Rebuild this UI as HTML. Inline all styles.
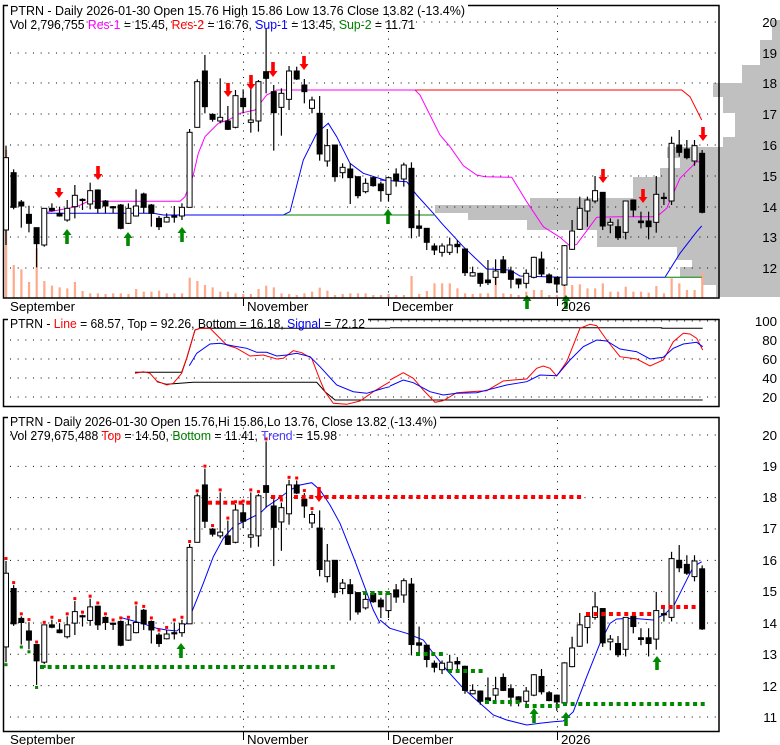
<!DOCTYPE html>
<html><head><meta charset="utf-8">
<style>
html,body{margin:0;padding:0;background:#fff;}
svg{display:block;font-family:"Liberation Sans",Arial,sans-serif;}
</style></head>
<body>
<svg id="s" width="780" height="745" viewBox="0 0 780 745" xmlns="http://www.w3.org/2000/svg">
<g id="prof" fill="#c0c0c0"></g>
<g id="grid" stroke="#000" stroke-width="1" stroke-dasharray="1,6.66" fill="none"></g>
<g id="vol" fill="#ffa98a"></g>
<g id="ov" fill="none"></g>
<g id="cand"></g>
<g id="marks"></g>
<g fill="none" stroke="#000" stroke-width="1.5">
<rect x="3.5" y="5.5" width="715.5" height="292.5"/>
<rect x="3.5" y="319.5" width="715.5" height="87"/>
<rect x="3.5" y="417.5" width="715.5" height="314"/>
</g>
<g stroke="#000" stroke-width="1">
<line x1="243.5" y1="298" x2="243.5" y2="306"/><line x1="388.5" y1="298" x2="388.5" y2="306"/><line x1="557.5" y1="298" x2="557.5" y2="306"/>
<line x1="243.5" y1="732" x2="243.5" y2="740"/><line x1="388.5" y1="732" x2="388.5" y2="740"/><line x1="557.5" y1="732" x2="557.5" y2="740"/>
</g>
<rect x="8" y="0" width="460" height="11" fill="#fff"/>
<rect x="8" y="312" width="360" height="12" fill="#fff"/>
<rect x="8" y="410" width="432" height="12" fill="#fff"/>
<g font-size="13.3" fill="#000" lengthAdjust="spacingAndGlyphs">
<text x="10" y="15" textLength="455" lengthAdjust="spacingAndGlyphs">PTRN - Daily 2026-01-30 Open 15.76  High 15.86  Low 13.76  Close 13.82 (-13.4%)</text>
<text x="10" y="29" textLength="405" lengthAdjust="spacingAndGlyphs">Vol 2,796,755 <tspan fill="#ff00ff">Res-1</tspan> = 15.45, <tspan fill="#ff0000">Res-2</tspan> = 16.76, <tspan fill="#0000ff">Sup-1</tspan> = 13.45, <tspan fill="#008000">Sup-2</tspan> = 11.71</text>
<text x="10" y="328" textLength="355" lengthAdjust="spacingAndGlyphs">PTRN - <tspan fill="#ff0000">Line</tspan> = 68.57, Top = 92.26, Bottom = 16.18, <tspan fill="#0000ff">Signal</tspan> = 72.12</text>
<text x="10" y="426" textLength="427" lengthAdjust="spacingAndGlyphs">PTRN - Daily 2026-01-30 Open 15.76,Hi 15.86,Lo 13.76, Close 13.82 (-13.4%)</text>
<text x="10" y="440" textLength="327" lengthAdjust="spacingAndGlyphs">Vol 279,675,488 <tspan fill="#ff0000">Top</tspan> = 14.50, <tspan fill="#008000">Bottom</tspan> = 11.41, <tspan fill="#4b3cff">Trend</tspan> = 15.98</text>
<text x="10" y="311">September</text><text x="247" y="311">November</text><text x="392" y="311">December</text><text x="561" y="311">2026</text>
<text x="10" y="744">September</text><text x="247" y="744">November</text><text x="392" y="744">December</text><text x="561" y="744">2026</text>
</g>
<g font-size="13.3" fill="#000" text-anchor="end">
<text x="777" y="27">20</text><text x="777" y="58">19</text><text x="777" y="88">18</text><text x="777" y="119">17</text><text x="777" y="150">16</text><text x="777" y="181">15</text><text x="777" y="212">14</text><text x="777" y="242">13</text><text x="777" y="273">12</text>
<text x="777" y="326">100</text><text x="777" y="345">80</text><text x="777" y="364">60</text><text x="777" y="383">40</text><text x="777" y="402">20</text>
<text x="777" y="440">20</text><text x="777" y="471">19</text><text x="777" y="502">18</text><text x="777" y="533">17</text><text x="777" y="565">16</text><text x="777" y="596">15</text><text x="777" y="628">14</text><text x="777" y="659">13</text><text x="777" y="691">12</text><text x="777" y="722">11</text>
</g>
</svg>
<script>
(function(){
var NS="http://www.w3.org/2000/svg";
function el(p,t,a){var e=document.createElementNS(NS,t);for(var k in a)e.setAttribute(k,a[k]);document.getElementById(p).appendChild(e);return e;}
var P=[[20,40,772],[40,65,760],[65,83,742],[83,97,713],[97,113,723],[113,137,735],[137,147,723],[147,158,667],[158,168,680],[168,177,660],[177,198,633],[198,205,530],[205,213,435],[213,220,468],[220,230,527],[230,247,597],[247,260,677],[260,267,692],[267,277,680],[277,285,703],[285,297,716]];
P.forEach(function(r){el("prof","rect",{x:r[2],y:r[0],width:780-r[2],height:r[1]-r[0]});});
function hgrid(y){el("grid","line",{x1:10,y1:y,x2:716,y2:y});}
[22,53,83,114,145,176,207,237,268].forEach(hgrid);
[321,340,359,378,397].forEach(hgrid);
for(var p=20;p>=11;p--)hgrid(435+(20-p)*31.33);
[243.5,388.5,557.5].forEach(function(x){el("grid","line",{x1:x,y1:8,x2:x,y2:296});el("grid","line",{x1:x,y1:420,x2:x,y2:730});});
var C=[[473,690,437,735,1],[518,622,508,628,0],[606,618,600,683,0],[643,670,617,697,0],[683,731,683,802,0],[625,735,625,740,1],[625,632,610,635,0],[640,648,620,650,0],[625,660,600,665,1],[586,620,555,655,1],[598,601,595,630,0],[572,612,548,628,1],[570,625,568,640,0],[603,618,600,640,0],[620,622,618,640,0],[615,685,612,688,0],[625,670,610,672,1],[618,648,568,650,1],[582,622,578,640,0],[615,640,612,680,0],[655,680,648,690,0],[652,666,640,668,1],[648,650,618,668,0],[622,648,610,660,1],[397,622,387,622,1],[245,382,238,382,1],[213,320,165,340,0],[343,358,340,365,0],[352,363,235,370,1],[363,388,318,390,0],[287,382,270,385,1],[295,320,268,340,0],[360,367,235,398,1],[245,363,240,395,1],[215,235,85,280,0],[275,338,255,452,0],[280,322,265,407,1],[213,298,198,330,1],[213,237,200,240,0],[255,275,237,310,0],[300,325,290,340,1],[340,462,288,482,0],[437,483,387,500,1],[435,530,435,545,0],[502,518,490,535,1],[507,533,490,612,0],[530,587,530,595,0],[550,575,535,580,1],[533,557,530,560,0],[552,572,545,605,0],[533,583,530,605,1],[522,543,505,560,0],[495,537,488,560,1],[505,683,487,715,0],[678,685,630,710,0],[685,727,685,750,0],[738,750,730,765,0],[738,757,730,770,1],[735,757,713,765,1],[733,740,720,760,0],[747,818,745,828,0],[818,828,800,830,1],[820,850,818,860,0],[840,848,780,855,0],[813,832,778,855,1],[780,818,768,820,0],[813,838,800,865,0],[837,852,835,865,0],[820,850,808,865,1],[772,832,770,835,1],[777,822,755,830,0],[825,848,820,850,0],[832,852,830,878,0],[737,855,735,858,1],[693,748,660,750,1],[625,688,590,690,1],[600,633,590,680,1],[572,603,528,610,1],[577,678,577,690,0],[667,675,655,700,1],[680,713,658,720,0],[603,697,603,718,1],[600,630,598,650,0],[663,668,635,685,0],[663,680,635,718,0],[583,667,528,698,1],[592,595,578,615,0],[430,603,410,615,1],[435,457,390,470,0],[447,473,420,478,0],[437,483,420,497,1],[460,637,450,640,0]];
var V=[450,795,808,846,745,843,857,862,865,846,873,880,880,882,880,880,882,867,875,875,872,880,880,880,833,843,855,862,875,875,880,882,882,867,857,862,880,882,885,880,875,863,872,885,882,880,880,880,885,885,882,885,885,828,882,873,850,850,850,865,880,882,880,880,820,880,882,885,875,870,870,885,885,855,855,853,865,865,850,875,875,860,875,875,878,858,880,835,850,870,870,818];
function X(i){return 6+7.65*i;}
function y3(z){return 435+(z/3-22)*31.33/30.75;}
V.forEach(function(z,i){el("vol","rect",{x:X(i)-1,y:z/3,width:2.2,height:297.7-z/3});});
function candle(i,c,f){var x=X(i);
 el("cand","line",{x1:x,y1:f(c[2]),x2:x,y2:f(c[3]),stroke:"#000","stroke-width":1.2});
 var h=Math.max(f(c[1])-f(c[0]),1.2);
 el("cand","rect",{x:x-2.5,y:f(c[0]),width:5,height:h,fill:c[4]?"#fff":"#000",stroke:"#000","stroke-width":1});}
C.forEach(function(c,i){candle(i,c,function(z){return z/3;});candle(i,c,y3);});
C.forEach(function(c,i){ if(i<41){el("marks","rect",{x:X(i)-1.5,y:y3(c[2])-4,width:3,height:3,fill:"#f00"});}});
[0,2,3,4,5].forEach(function(i){el("marks","rect",{x:X(i)-1.5,y:y3(C[i][3])+1,width:3,height:3,fill:"#080"});});
function pl(pts,col,w,ox,oy){var s=pts.map(function(p){return (ox+p[0]/3).toFixed(1)+","+(oy+p[1]/3).toFixed(1);}).join(" ");
 el("ov","polyline",{points:s,stroke:col,"stroke-width":w||1});}
pl([[140,637],[230,620],[265,604],[540,604],[555,590],[580,525],[595,460],[615,410],[655,370],[685,360],[720,340],[765,330],[800,285],[830,270],[1245,270]],"#ff00ff",1,0,0);
pl([[105,270],[120,285],[180,405],[210,440],[250,497],[290,525],[315,530],[395,532],[440,605],[490,680],[540,712],[570,738],[590,733],[650,652],[720,650],[830,650],[860,625],[900,535],[950,485],[965,485]],"#ff00ff",1,380,0);
pl([[105,270],[905,270],[930,290],[965,360]],"#ff0000",1,380,0);
pl([[140,640],[460,640],[490,645],[850,645],[870,635],[910,480],[950,400],[985,370],[1010,410],[1050,490],[1090,520],[1170,545]],"#0000ff",1,0,0);
pl([[0,540],[80,545],[110,585],[160,640],[185,670],[250,740],[320,807],[390,810],[420,828],[545,832],[855,832],[900,760],[950,695],[965,678]],"#0000ff",1,380,0);
pl([[850,645],[1305,645]],"#008000",1,0,0);
pl([[855,832],[965,832]],"#008000",1,380,0);
pl([[405,232],[545,232],[560,190],[585,105],[600,100]],"#000",1,0,295);
pl([[470,260],[500,268],[580,262],[950,262],[975,290],[1005,315],[1200,315]],"#000",1,0,295);
pl([[0,143],[815,143],[815,145],[938,145]],"#000",1,390,280);
pl([[0,360],[938,360]],"#000",1,390,280);
pl([[600,100],[1170,100]],"#000",1,0,295);
pl([[405,235],[430,230],[450,235],[470,258],[500,270],[520,265],[545,235],[560,190],[585,105],[600,100],[630,100],[680,150],[710,160],[750,183],[790,180],[830,192],[850,190],[880,167],[905,173],[935,190],[960,255],[975,290],[1000,325],[1040,328],[1080,318],[1120,290],[1170,260]],"#ff0000",1,0,295);
pl([[0,300],[40,278],[70,295],[100,330],[135,367],[160,362],[200,338],[240,335],[290,332],[340,303],[370,300],[410,297],[440,265],[460,258],[480,265],[500,288],[530,245],[570,145],[600,133],[620,137],[650,180],[690,230],[740,237],[780,258],[820,240],[850,185],[880,160],[900,162],[920,175],[938,210]],"#ff0000",1,390,280);
pl([[568,212],[590,175],[630,147],[660,145],[700,153],[740,160],[770,172],[800,172],[830,183],[860,180],[890,175],[930,185],[960,215],[1010,270],[1060,290],[1100,295],[1150,280],[1170,275]],"#0000ff",1,0,295);
pl([[0,318],[40,300],[70,308],[120,335],[160,345],[200,340],[260,338],[300,328],[350,315],[410,305],[450,285],[500,287],[540,240],[580,200],[620,180],[650,183],[690,207],[740,215],[780,237],[820,232],[850,205],[880,192],[920,187],[938,200]],"#0000ff",1,390,280);
pl([[360,622],[420,638],[470,655],[500,660],[530,663],[560,640],[580,595],[610,520],[640,440],[670,385],[700,350],[740,330],[780,310],[800,290],[830,270],[870,240],[900,225],[935,218],[960,240],[990,285],[1020,340],[1060,440],[1090,520],[1120,600],[1140,640]],"#0000ff",1,0,410);
pl([[0,630],[30,655],[80,670],[130,690],[160,730],[200,780],[250,835],[300,880],[340,915],[380,930],[440,945],[480,940],[520,935],[550,933],[580,905],[620,800],[660,700],[690,640],[710,627],[760,625],[820,630],[850,615],[880,590],[910,530],[940,470],[965,455]],"#0000ff",1,380,410);
function dots(x1,x2,y,col){for(var x=x1;x<=x2;x+=7.65)el("marks","rect",{x:x-2,y:y-2,width:4,height:4,fill:col});}
dots(210,253,502.7,"#f00");dots(273,286,497,"#f00");dots(296,580,497,"#f00");dots(588,650,614,"#f00");dots(663,697,607,"#f00");
dots(42,337,667,"#080");dots(365,390,593,"#080");dots(418,443,654,"#080");dots(450,483,671,"#080");dots(487,520,702,"#080");dots(527,560,706,"#080");dots(565,705,704,"#080");
function arr(x,y1,y2,col){var up=y2<y1;var tip=y2,base=y1;
 var d=up?1:-1;var hy=tip+d*6;
 el("marks","path",{d:"M"+(x-1.8)+","+base+" L"+(x-1.8)+","+hy+" L"+(x-4.5)+","+hy+" L"+x+","+tip+" L"+(x+4.5)+","+hy+" L"+(x+1.8)+","+hy+" L"+(x+1.8)+","+base+"Z",fill:col});}
[[59,188,198],[98,166,180],[228,83,97],[251,75,90],[273,62,77],[304,56,70],[603,169,183],[643,189,203],[703,127,141],[319,487,502]].forEach(function(a){arr(a[0],a[1],a[2],"#f00");});
[[67,244,229],[128,246,232],[182,242,227],[388,224,209],[527,309,295],[566,309,295],[181,658,643],[534,723,708],[566,726,712],[657,670,656]].forEach(function(a){arr(a[0],a[1],a[2],"#080");});
})();
</script>
</body></html>
